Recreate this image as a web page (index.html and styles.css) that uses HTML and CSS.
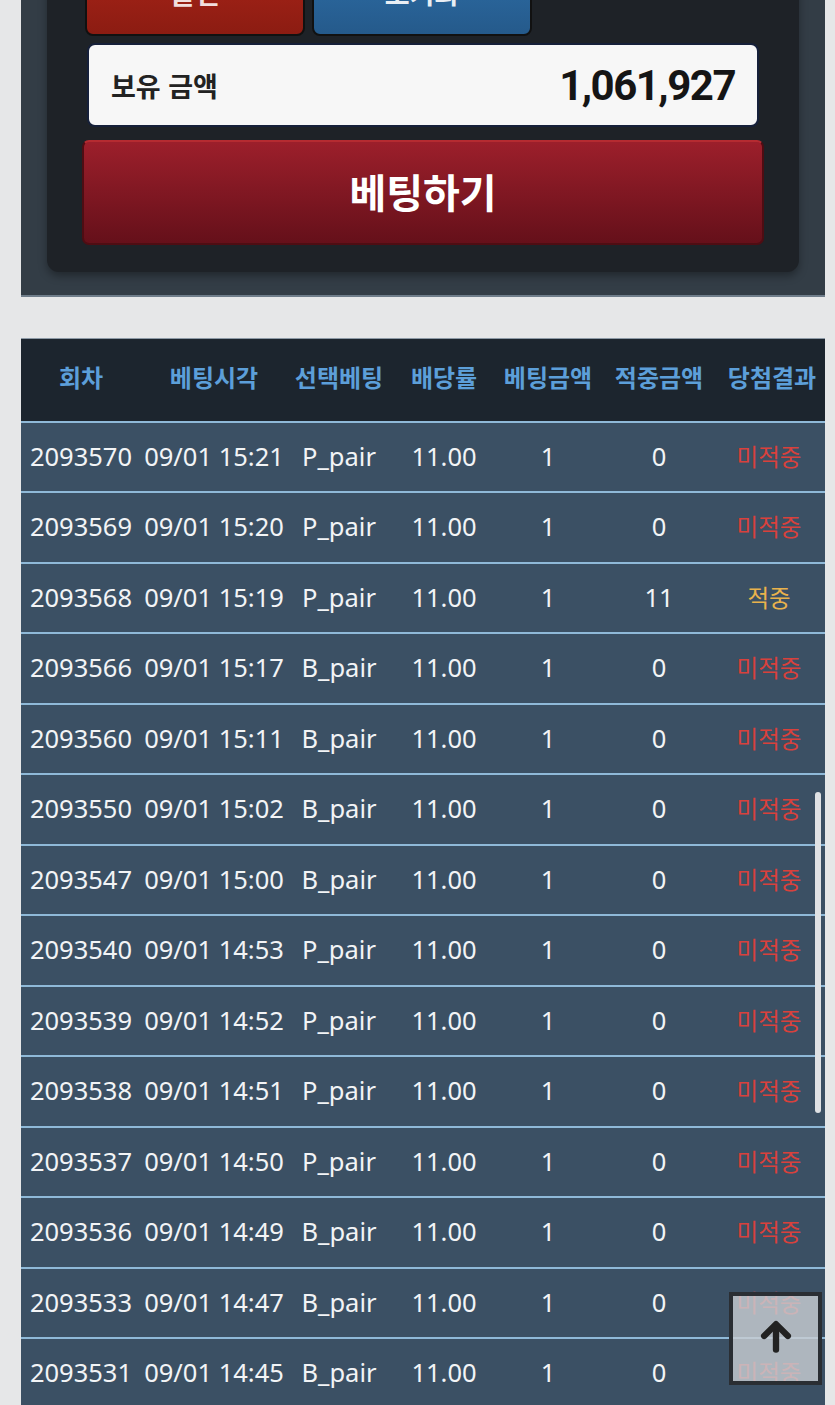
FILE: index.html
```html
<!DOCTYPE html>
<html lang="ko">
<head>
<meta charset="utf-8">
<title>베팅</title>
<link rel="stylesheet" href="styles.css">
</head>
<body>
<div class="page">
  <section class="panel">
    <div class="panel-inner">
      <div class="quick-row">
        <button class="quick quick-red">올인</button>
        <button class="quick quick-blue">초기화</button>
      </div>
      <div class="balance">
        <span class="balance-label">보유 금액</span>
        <span class="balance-value">1,061,927</span>
      </div>
      <button class="bet-btn">베팅하기</button>
    </div>
  </section>

  <table class="history">
    <colgroup>
      <col class="c1"><col class="c2"><col class="c3"><col class="c4"><col class="c5"><col class="c6"><col class="c7">
    </colgroup>
    <thead>
      <tr>
        <th>회차</th><th>베팅시각</th><th>선택베팅</th><th>배당률</th><th>베팅금액</th><th>적중금액</th><th>당첨결과</th>
      </tr>
    </thead>
    <tbody>
      <tr><td>2093570</td><td>09/01 15:21</td><td>P_pair</td><td>11.00</td><td>1</td><td>0</td><td class="lose">미적중</td></tr>
      <tr><td>2093569</td><td>09/01 15:20</td><td>P_pair</td><td>11.00</td><td>1</td><td>0</td><td class="lose">미적중</td></tr>
      <tr><td>2093568</td><td>09/01 15:19</td><td>P_pair</td><td>11.00</td><td>1</td><td>11</td><td class="win">적중</td></tr>
      <tr><td>2093566</td><td>09/01 15:17</td><td>B_pair</td><td>11.00</td><td>1</td><td>0</td><td class="lose">미적중</td></tr>
      <tr><td>2093560</td><td>09/01 15:11</td><td>B_pair</td><td>11.00</td><td>1</td><td>0</td><td class="lose">미적중</td></tr>
      <tr><td>2093550</td><td>09/01 15:02</td><td>B_pair</td><td>11.00</td><td>1</td><td>0</td><td class="lose">미적중</td></tr>
      <tr><td>2093547</td><td>09/01 15:00</td><td>B_pair</td><td>11.00</td><td>1</td><td>0</td><td class="lose">미적중</td></tr>
      <tr><td>2093540</td><td>09/01 14:53</td><td>P_pair</td><td>11.00</td><td>1</td><td>0</td><td class="lose">미적중</td></tr>
      <tr><td>2093539</td><td>09/01 14:52</td><td>P_pair</td><td>11.00</td><td>1</td><td>0</td><td class="lose">미적중</td></tr>
      <tr><td>2093538</td><td>09/01 14:51</td><td>P_pair</td><td>11.00</td><td>1</td><td>0</td><td class="lose">미적중</td></tr>
      <tr><td>2093537</td><td>09/01 14:50</td><td>P_pair</td><td>11.00</td><td>1</td><td>0</td><td class="lose">미적중</td></tr>
      <tr><td>2093536</td><td>09/01 14:49</td><td>B_pair</td><td>11.00</td><td>1</td><td>0</td><td class="lose">미적중</td></tr>
      <tr><td>2093533</td><td>09/01 14:47</td><td>B_pair</td><td>11.00</td><td>1</td><td>0</td><td class="lose">미적중</td></tr>
      <tr><td>2093531</td><td>09/01 14:45</td><td>B_pair</td><td>11.00</td><td>1</td><td>0</td><td class="lose">미적중</td></tr>
      <tr><td>2093529</td><td>09/01 14:43</td><td>P_pair</td><td>11.00</td><td>1</td><td>0</td><td class="lose">미적중</td></tr>
    </tbody>
  </table>
</div>

<div class="scroll-indicator"></div>
<button class="to-top" aria-label="맨 위로">
  <svg width="38" height="38" viewBox="0 0 24 24" fill="none" stroke="#222" stroke-width="4" stroke-linecap="round" stroke-linejoin="round">
    <path d="M12 20.5V5.5"/>
    <path d="M4.5 12L12 4.5L19.5 12"/>
  </svg>
</button>
</body>
</html>
```

FILE: styles.css
```css
* { box-sizing: border-box; }

html, body {
  margin: 0;
  padding: 0;
  background: #e6e7e8;
  font-family: "Noto Sans", "Noto Sans CJK KR", sans-serif;
  overflow: hidden;
}

.page {
  padding: 0 10px 0 21px;
}

.panel {
  margin-top: -40px;
  background: #333d46;
  border-bottom: 2px solid #6f7d8a;
  padding: 0 26px 23px;
}

.panel-inner {
  background: #1e2227;
  border-radius: 0 0 12px 12px;
  padding: 0 40px 27px;
  box-shadow: 0 4px 8px rgba(0, 0, 0, 0.35);
}

.quick-row {
  display: flex;
  gap: 7px;
  margin-left: -2px;
}

.quick {
  width: 220px;
  height: 76px;
  border: 2px solid #111;
  border-radius: 0 0 8px 8px;
  color: #f1dede;
  font-family: "Noto Sans CJK KR", sans-serif;
  font-weight: 700;
  font-size: 27px;
  padding: 0 0 12px;
}

.quick-red {
  background: linear-gradient(#a82418, #8c1c12);
}

.quick-blue {
  background: linear-gradient(#2d6da6, #255a8b);
  color: #e9eef4;
}

.balance {
  margin-top: 7px;
  height: 84px;
  background: #f7f7f7;
  border: 2px solid #16203a;
  border-radius: 8px;
  display: flex;
  align-items: center;
  justify-content: space-between;
  padding: 0 22px 0 22px;
}

.balance-label {
  font-family: "Noto Sans CJK KR", sans-serif;
  font-weight: 700;
  font-size: 27px;
  color: #222;
}

.balance-value {
  font-family: Roboto, "Liberation Sans", sans-serif;
  font-weight: 700;
  font-size: 42px;
  color: #151515;
  letter-spacing: -1.5px;
}

.bet-btn {
  display: block;
  margin: 13px -5px 0;
  width: calc(100% + 10px);
  height: 105px;
  background: linear-gradient(#9c1f2b, #65101a);
  border: 2px solid #4e0d13;
  border-top-color: #b52b31;
  border-radius: 7px;
  color: #fff;
  font-family: "Noto Sans CJK KR", sans-serif;
  font-weight: 700;
  font-size: 40px;
  padding: 0 0 4px;
}

.history {
  margin-top: 41px;
  width: 804px;
  table-layout: fixed;
  border-collapse: collapse;
  background: #3b5064;
}

.c1 { width: 120px; }
.c2 { width: 146px; }
.c3 { width: 104px; }
.c4 { width: 106px; }
.c5 { width: 102px; }
.c6 { width: 120px; }
.c7 { width: 106px; }

.history th {
  height: 83px;
  background: #1c252e;
  border-top: 1px solid #8d9aa6;
  border-bottom: 2px solid #8fb9d8;
  color: #5c9fd9;
  font-family: "Noto Sans CJK KR", sans-serif;
  font-weight: 700;
  font-size: 24px;
  text-align: center;
  padding: 0 0 7px;
  white-space: nowrap;
}

.history td {
  height: 70.5px;
  padding: 0 0 2px;
  border-bottom: 2px solid #8fb9d8;
  color: #f2f4f6;
  font-size: 25.5px;
  text-align: center;
  white-space: nowrap;
}

.history td.lose {
  color: #d8413c;
  font-family: "Noto Sans CJK KR", sans-serif;
  font-size: 23.5px;
  padding-right: 6px;
}

.history td.win {
  color: #e9b24c;
  font-family: "Noto Sans CJK KR", sans-serif;
  font-size: 23.5px;
  padding-right: 6px;
}

.scroll-indicator {
  position: fixed;
  right: 14px;
  top: 792px;
  width: 6px;
  height: 321px;
  border-radius: 3px;
  background: #dfe1e4;
}

.to-top {
  position: fixed;
  right: 13px;
  bottom: 20px;
  width: 93px;
  height: 93px;
  border: 4px solid #2a2e33;
  background: rgba(200, 205, 210, 0.82);
  display: flex;
  align-items: center;
  justify-content: center;
  padding: 0 0 6px;
}
```
